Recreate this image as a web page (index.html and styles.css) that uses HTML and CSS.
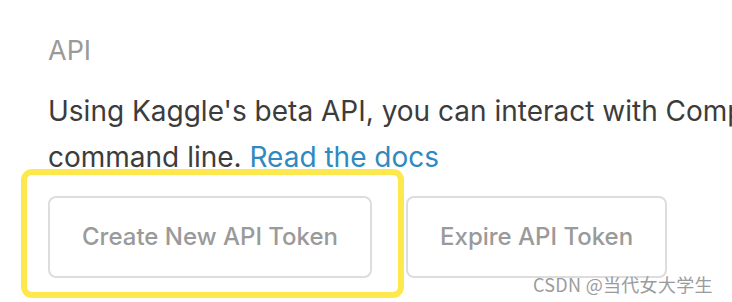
FILE: index.html
```html
<!DOCTYPE html>
<html>
<head>
<meta charset="utf-8">
<link rel="stylesheet" href="styles.css">
</head>
<body>
<main class="section">
  <h2 class="title">API</h2>
  <p class="desc">Using Kaggle's beta API, you can interact with Competitions and Datasets to download data, make submissions, and more via the<br>command line. <a class="link" href="#">Read the docs</a></p>
  <div class="actions">
    <button class="btn">Create New API Token</button>
    <button class="btn">Expire API Token</button>
  </div>
</main>
<div class="highlight"></div>
<div class="watermark">CSDN @当代女大学生</div>
</body>
</html>
```
FILE: styles.css
```css
html, body {
  margin: 0;
  padding: 0;
  background: #ffffff;
  overflow: hidden;
  width: 732px;
  height: 302px;
  position: relative;
  font-family: Inter, "Noto Sans", sans-serif;
}
.section {
  padding: 36px 0 0 48px;
  overflow: hidden;
}
.title {
  margin: 0;
  font-size: 27px;
  line-height: 30px;
  font-weight: 400;
  color: #9a9a9a;
}
.desc {
  margin: 22px 0 0 0;
  font-size: 28px;
  line-height: 46px;
  color: #3c3c3c;
  white-space: nowrap;
}
.link {
  color: #2f8ac0;
  text-decoration: none;
}
.actions {
  display: flex;
  gap: 34px;
  margin-top: 15.5px;
}
.btn {
  box-sizing: border-box;
  height: 82px;
  padding: 0 32px;
  background: #fff;
  border: 2px solid #dddddd;
  border-radius: 8px;
  font-family: Inter, "Noto Sans", sans-serif;
  font-size: 24px;
  font-weight: 500;
  color: #9a9a9a;
}
.highlight {
  position: absolute;
  left: 21px;
  top: 169px;
  width: 383px;
  height: 129px;
  box-sizing: border-box;
  border: 6px solid #fde94d;
  border-radius: 11px;
}
.watermark {
  position: absolute;
  left: 533px;
  top: 274px;
  font-family: "Noto Sans CJK SC", sans-serif;
  font-size: 18px;
  line-height: 20px;
  color: #9b9b9b;
  letter-spacing: 0.3px;
}
```
